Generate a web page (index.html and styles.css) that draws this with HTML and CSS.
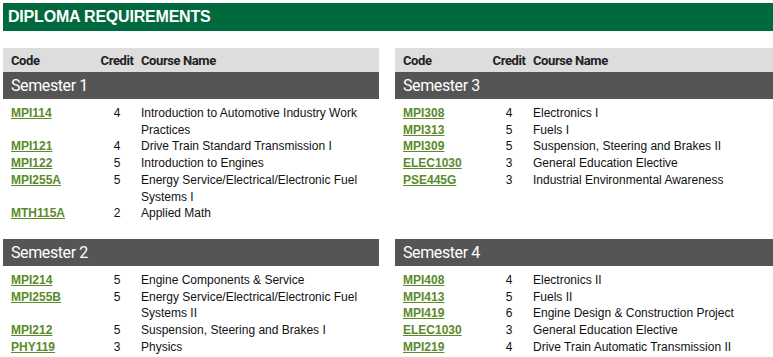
FILE: index.html
```html
<!DOCTYPE html>
<html>
<head>
<meta charset="utf-8">
<link rel="stylesheet" href="styles.css">
</head>
<body>
<div class="page">
  <h1 class="title">DIPLOMA REQUIREMENTS</h1>
  <div class="grid">
    <div class="colhead"><span class="c-code">Code</span><span class="c-credit">Credit</span><span class="c-name">Course Name</span></div>
    <div class="colhead"><span class="c-code">Code</span><span class="c-credit">Credit</span><span class="c-name">Course Name</span></div>

    <section class="sem">
      <div class="sem-bar">Semester 1</div>
      <div class="rows">
        <div class="row"><a class="code" href="#">MPI114</a><span class="credit">4</span><span class="name">Introduction to Automotive Industry Work Practices</span></div>
        <div class="row"><a class="code" href="#">MPI121</a><span class="credit">4</span><span class="name">Drive Train Standard Transmission I</span></div>
        <div class="row"><a class="code" href="#">MPI122</a><span class="credit">5</span><span class="name">Introduction to Engines</span></div>
        <div class="row"><a class="code" href="#">MPI255A</a><span class="credit">5</span><span class="name">Energy Service/Electrical/Electronic Fuel Systems I</span></div>
        <div class="row"><a class="code" href="#">MTH115A</a><span class="credit">2</span><span class="name">Applied Math</span></div>
      </div>
    </section>

    <section class="sem">
      <div class="sem-bar">Semester 3</div>
      <div class="rows">
        <div class="row"><a class="code" href="#">MPI308</a><span class="credit">4</span><span class="name">Electronics I</span></div>
        <div class="row"><a class="code" href="#">MPI313</a><span class="credit">5</span><span class="name">Fuels I</span></div>
        <div class="row"><a class="code" href="#">MPI309</a><span class="credit">5</span><span class="name">Suspension, Steering and Brakes II</span></div>
        <div class="row"><a class="code" href="#">ELEC1030</a><span class="credit">3</span><span class="name">General Education Elective</span></div>
        <div class="row"><a class="code" href="#">PSE445G</a><span class="credit">3</span><span class="name">Industrial Environmental Awareness</span></div>
      </div>
    </section>

    <section class="sem">
      <div class="sem-bar">Semester 2</div>
      <div class="rows">
        <div class="row"><a class="code" href="#">MPI214</a><span class="credit">5</span><span class="name">Engine Components &amp; Service</span></div>
        <div class="row"><a class="code" href="#">MPI255B</a><span class="credit">5</span><span class="name">Energy Service/Electrical/Electronic Fuel Systems II</span></div>
        <div class="row"><a class="code" href="#">MPI212</a><span class="credit">5</span><span class="name">Suspension, Steering and Brakes I</span></div>
        <div class="row"><a class="code" href="#">PHY119</a><span class="credit">3</span><span class="name">Physics</span></div>
      </div>
    </section>

    <section class="sem">
      <div class="sem-bar">Semester 4</div>
      <div class="rows">
        <div class="row"><a class="code" href="#">MPI408</a><span class="credit">4</span><span class="name">Electronics II</span></div>
        <div class="row"><a class="code" href="#">MPI413</a><span class="credit">5</span><span class="name">Fuels II</span></div>
        <div class="row"><a class="code" href="#">MPI419</a><span class="credit">6</span><span class="name">Engine Design &amp; Construction Project</span></div>
        <div class="row"><a class="code" href="#">ELEC1030</a><span class="credit">3</span><span class="name">General Education Elective</span></div>
        <div class="row"><a class="code" href="#">MPI219</a><span class="credit">4</span><span class="name">Drive Train Automatic Transmission II</span></div>
      </div>
    </section>
  </div>
</div>
</body>
</html>
```

FILE: styles.css
```css
html, body {
  margin: 0;
  padding: 0;
  background: #ffffff;
}
body {
  padding: 3px 0 0 3px;
  font-family: "Liberation Sans", Arial, sans-serif;
  font-size: 12px;
  color: #111111;
  overflow: hidden;
}
.title {
  margin: 0;
  height: 28px;
  line-height: 28px;
  padding-left: 5px;
  background: #006a3e;
  color: #ffffff;
  font-family: "Liberation Sans", Arial, sans-serif;
  font-weight: bold;
  font-size: 16px;
  letter-spacing: -0.2px;
}
.grid {
  margin-top: 17px;
  display: grid;
  grid-template-columns: 376px 1fr;
  column-gap: 16px;
}
.colhead {
  height: 24px;
  background: #dddddd;
  display: grid;
  grid-template-columns: 86px 40px 1fr;
  padding-left: 8px;
  align-items: center;
  font-family: Roboto, sans-serif;
  font-weight: bold;
  font-size: 13px;
  letter-spacing: -0.4px;
  color: #222222;
}
.colhead .c-credit {
  text-align: center;
}
.colhead .c-name {
  padding-left: 4px;
}
.sem-bar {
  height: 27px;
  line-height: 27px;
  background: #555555;
  color: #ffffff;
  padding-left: 8px;
  font-family: Roboto, sans-serif;
  font-size: 16px;
  letter-spacing: -0.4px;
}
.rows {
  padding: 6px 0 17px 0;
}
.row {
  display: grid;
  grid-template-columns: 86px 40px 1fr;
  padding-left: 8px;
  line-height: 16.7px;
}
.code {
  color: #5a8a2a;
  font-weight: bold;
  text-decoration: underline;
}
.credit {
  text-align: center;
}
.name {
  padding-left: 4px;
  padding-right: 12px;
}
```
